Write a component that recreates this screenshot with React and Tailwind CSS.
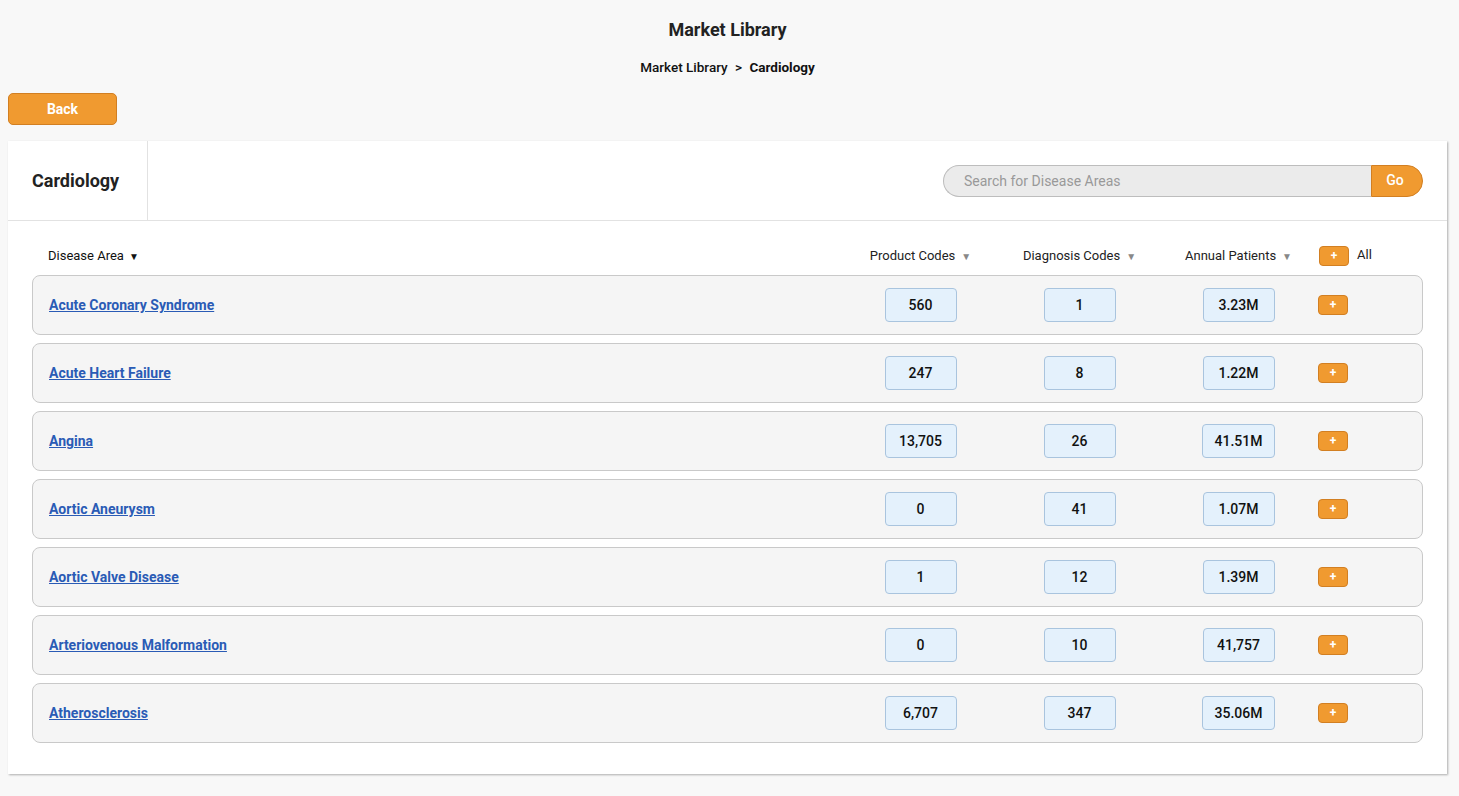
import React from 'react';

const ROWS = [
  { name: 'Acute Coronary Syndrome', product: '560', diagnosis: '1', patients: '3.23M' },
  { name: 'Acute Heart Failure', product: '247', diagnosis: '8', patients: '1.22M' },
  { name: 'Angina', product: '13,705', diagnosis: '26', patients: '41.51M' },
  { name: 'Aortic Aneurysm', product: '0', diagnosis: '41', patients: '1.07M' },
  { name: 'Aortic Valve Disease', product: '1', diagnosis: '12', patients: '1.39M' },
  { name: 'Arteriovenous Malformation', product: '0', diagnosis: '10', patients: '41,757' },
  { name: 'Atherosclerosis', product: '6,707', diagnosis: '347', patients: '35.06M' }
];

const PlusButton = () => (
  <button className="w-[30px] h-[20px] rounded-[4px] bg-[#f09a30] border border-[#d27f22] text-white text-[12px] font-bold leading-none flex items-center justify-center">
    +
  </button>
);

const ValueBox = ({ children }) => (
  <div className="min-w-[72px] h-[34px] px-3 rounded-[4px] bg-[#e4f1fc] border border-[#a9c4de] flex items-center justify-center text-[14px] font-medium text-[#111]">
    {children}
  </div>
);

const SortHead = ({ label }) => (
  <span className="flex items-center gap-[6px] text-[13px] text-[#222]">
    {label}
    <span className="text-[#888] text-[10px]">▼</span>
  </span>
);

const App = () => {
  return (
    <div className="min-h-[796px] bg-[#f8f8f8] pl-2 pr-3 pb-5 font-['Roboto',sans-serif]">
      <div className="pt-[19px] text-center">
        <h1 className="text-[18px] font-bold text-[#222] leading-[22px]">Market Library</h1>
        <div className="mt-[18px] text-[13.5px] leading-[16px] text-[#111] font-medium">
          Market Library <span className="mx-1">&gt;</span> <span className="font-bold">Cardiology</span>
        </div>
      </div>

      <button className="mt-[18px] w-[109px] h-[32px] rounded-[5px] bg-[#f09a30] border border-[#d27f22] text-white text-[14px] font-bold">
        Back
      </button>

      <div className="mt-4 bg-white shadow-[1px_1px_2px_rgba(0,0,0,0.3)] pb-[31px]">
        <div className="flex h-[80px] border-b border-[#e2e2e2]">
          <div className="w-[140px] border-r border-[#e2e2e2] flex items-center pl-6">
            <h2 className="text-[18px] font-bold text-[#222]">Cardiology</h2>
          </div>
          <div className="flex-1 flex items-center justify-end pr-6">
            <div className="flex h-[32px]">
              <input
                className="w-[428px] h-full rounded-l-full bg-[#ebebeb] border border-[#bdbdbd] border-r-0 pl-5 text-[14px] text-[#333] placeholder-[#999] outline-none"
                placeholder="Search for Disease Areas"
              />
              <button className="w-[52px] h-full rounded-r-full bg-[#f09a30] border border-[#d27f22] text-white text-[14px] font-medium pr-1">
                Go
              </button>
            </div>
          </div>
        </div>

        <div className="px-6">
          <div className="flex items-center h-[20px] mt-[25px] mb-[9px]">
            <div className="flex-1 pl-4 flex items-center gap-[5px] text-[13px] text-[#111]">
              Disease Area <span className="text-[10px]">▼</span>
            </div>
            <div className="w-[159px] flex justify-center"><SortHead label="Product Codes" /></div>
            <div className="w-[159px] flex justify-center"><SortHead label="Diagnosis Codes" /></div>
            <div className="w-[159px] flex justify-center"><SortHead label="Annual Patients" /></div>
            <div className="w-[105px] flex items-center gap-2 pl-[1px]">
              <PlusButton />
              <span className="text-[13px] text-[#222] -mt-[2px]">All</span>
            </div>
          </div>

          <div className="flex flex-col gap-2">
            {ROWS.map(r => (
              <div key={r.name} className="flex items-center h-[60px] rounded-[8px] bg-[#f5f5f5] border border-[#c9c9c9]">
                <div className="flex-1 pl-4">
                  <a href="#" className="text-[14px] font-bold text-[#2a5bb5] underline">{r.name}</a>
                </div>
                <div className="w-[159px] flex justify-center"><ValueBox>{r.product}</ValueBox></div>
                <div className="w-[159px] flex justify-center"><ValueBox>{r.diagnosis}</ValueBox></div>
                <div className="w-[159px] flex justify-center"><ValueBox>{r.patients}</ValueBox></div>
                <div className="w-[104px] flex items-center">
                  <PlusButton />
                </div>
              </div>
            ))}
          </div>
        </div>
      </div>
    </div>
  );
};

export default App;
